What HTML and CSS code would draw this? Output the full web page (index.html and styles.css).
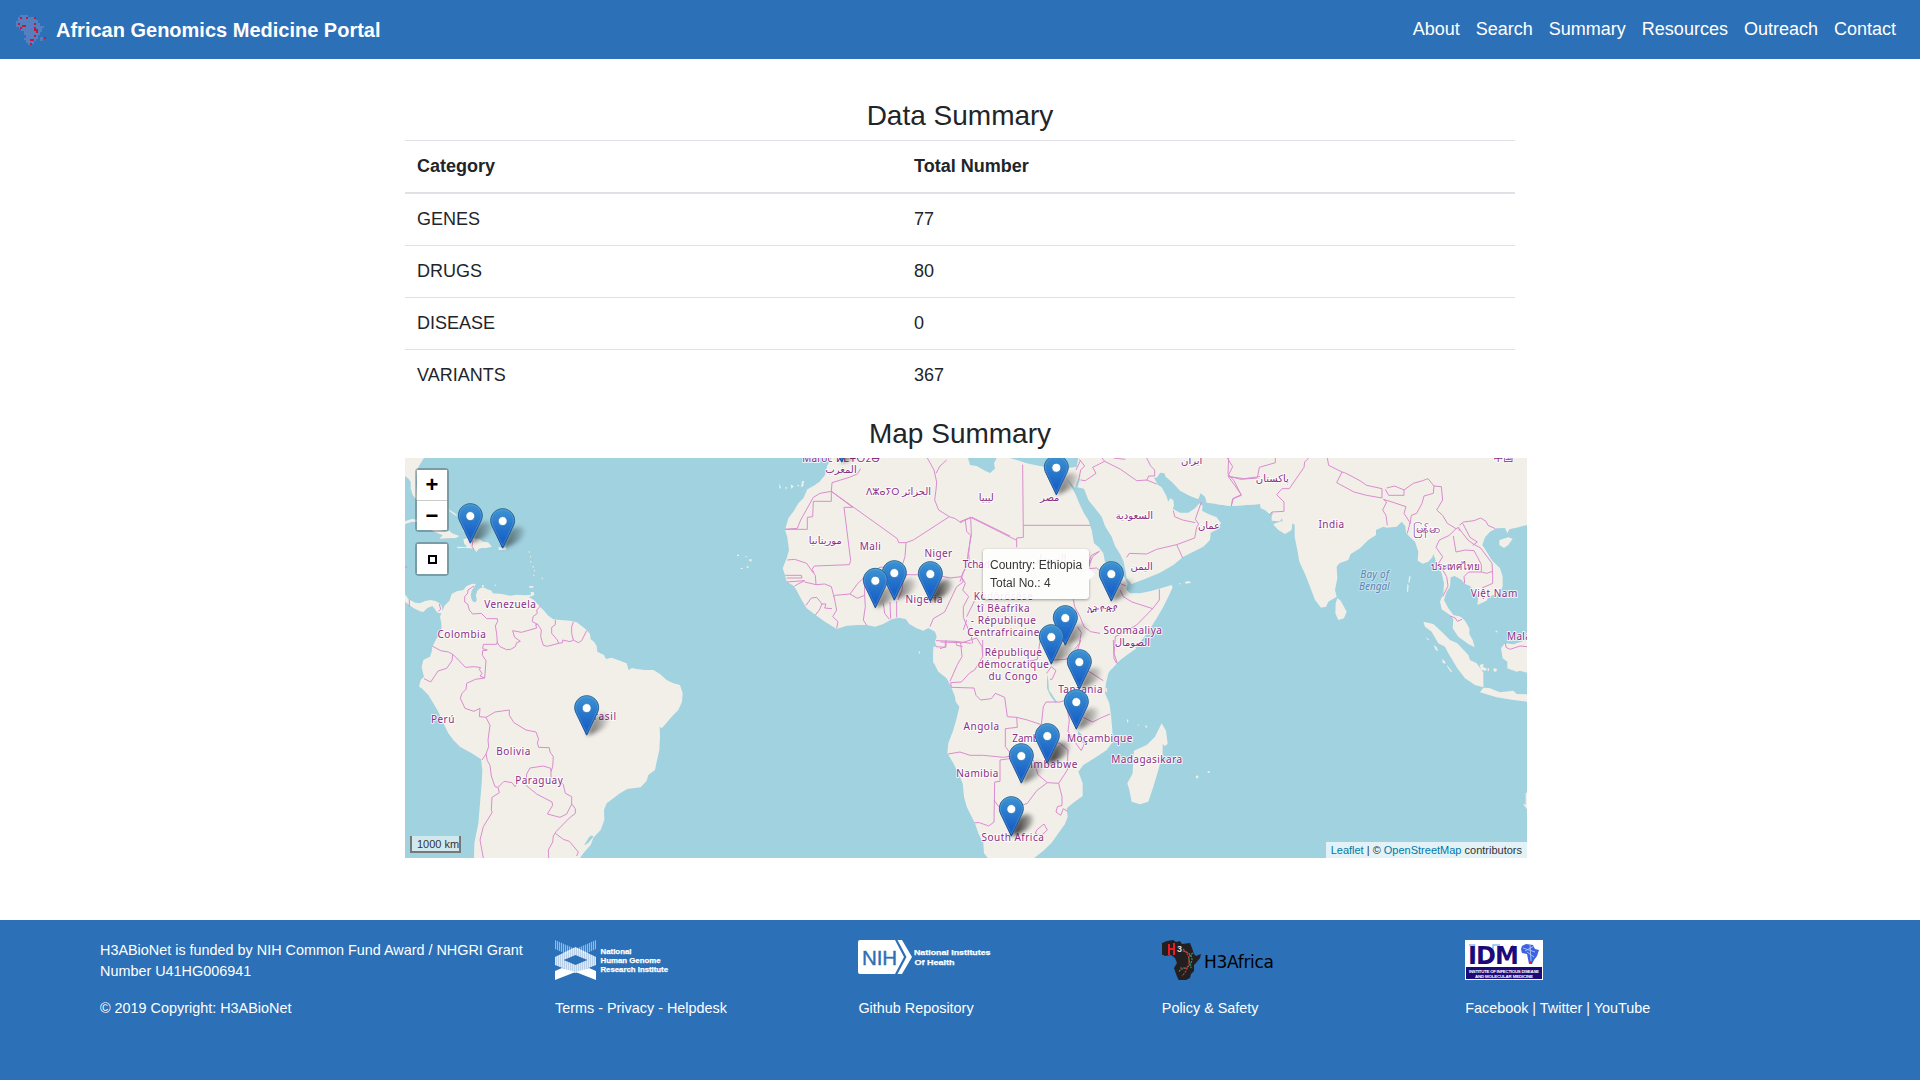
FILE: index.html
```html
<!DOCTYPE html>
<html lang="en">
<head>
<meta charset="utf-8">
<title>African Genomics Medicine Portal</title>
<link rel="stylesheet" href="styles.css">
</head>
<body>
<nav class="navbar">
  <a class="brand">
    <svg class="brand-logo" viewBox="0 0 30 30" aria-hidden="true">
      <path fill="#5480c2" d="M4 0h8v2h8v3h2v3h2v3h4v2h-2v4h-2v3h-2v4h-2v2h-2v3h-3v2h-3v-3h-2v-3h-2v-2h2v-3h-2v-4h-3v-3H7v1H3v-2H0V6h2V2h2z"/>
      <path fill="#5480c2" d="M24 22h3v4h-3z"/>
      <path fill="#c2183a" d="M4 2h2v2H4zM10 2h2v2h-2zM18 2h2v2h-2zM2 8h2v2H2zM6 10h4v2H6zM4 12h2v2H4zM18 8h2v2h-2zM18 12h2v2h2v4h-2v-2h-2zM18 20h2v2h-2zM14 24h4v2h-4zM28 22h2v2h-2zM14 28h2v2h-2z"/>
    </svg>
    <span>African Genomics Medicine Portal</span>
  </a>
  <div class="nav-links">
    <a>About</a><a>Search</a><a>Summary</a><a>Resources</a><a>Outreach</a><a>Contact</a>
  </div>
</nav>

<main class="container">
  <h3>Data Summary</h3>
  <table class="table">
    <thead><tr><th class="col-category">Category</th><th>Total Number</th></tr></thead>
    <tbody>
      <tr><td>GENES</td><td>77</td></tr>
      <tr><td>DRUGS</td><td>80</td></tr>
      <tr><td>DISEASE</td><td>0</td></tr>
      <tr><td>VARIANTS</td><td>367</td></tr>
    </tbody>
  </table>
  <h3>Map Summary</h3>
  <div class="map">
    <svg class="map-canvas" viewBox="15 24 3366 1200">
      <defs>
        <linearGradient id="pin-fill" x1="0" y1="0" x2="0" y2="1">
          <stop offset="0" stop-color="#3d93d2"/><stop offset=".75" stop-color="#1a64c8"/><stop offset="1" stop-color="#1a64c8"/>
        </linearGradient>
        <linearGradient id="pin-line" x1="0" y1="0" x2="0" y2="1">
          <stop offset="0" stop-color="#2e6c97"/><stop offset="1" stop-color="#1c4f94"/>
        </linearGradient>
        <linearGradient id="shade" x1="0" y1="0" x2="1" y2="0">
          <stop offset="0" stop-color="#000" stop-opacity=".6"/><stop offset="1" stop-color="#000" stop-opacity=".08"/>
        </linearGradient>
        <filter id="soft" x="-50%" y="-50%" width="200%" height="200%"><feGaussianBlur stdDeviation="2"/></filter>
        <g id="pin" transform="scale(3) translate(-12.5 -40.5)">
          <path fill="url(#pin-fill)" stroke="url(#pin-line)" d="M12.5.5C5.9.5.5 5.9.5 12.5c0 3 1.500 5.700 2.800 8.300L12.500 40l9.200-19.200c1.300-2.600 2.800-5.300 2.800-8.300C24.500 5.900 19.100.5 12.500.5z"/>
          <path fill="none" stroke="#fff" stroke-opacity=".13" d="M12.500 1.600C6.500 1.600 1.600 6.500 1.600 12.500c0 2.700 1.400 5.300 2.700 7.900L12.500 37.700l8.200-17.300c1.300-2.600 2.700-5.200 2.700-7.900C23.400 6.500 18.500 1.600 12.500 1.600z"/>
          <circle cx="12.500" cy="12.900" r="4.500" fill="#fff" stroke="#2a73b4" stroke-width=".8"/>
        </g>
        <g id="shadow" transform="scale(3)">
          <path fill="url(#shade)" filter="url(#soft)" d="M0 0L6-15C9-22 20-24 22-18C23-11 14-4 0 0z"/>
        </g>
      </defs>

      <g class="land">
        <path d="M15 24L72 24 58 46 50 62 48 100 52 152 38 135 32 115 32 95 24 85 15 78z"/>
        <path d="M15 214l20-7 18 2-4 6-14 1-20 6zM98 240l14-2 20 6 16-2 8 8 22 8-10 6-24 1-26 1 10-10-14-6-18-8zM190 268l14-4 20 1 16 2 8 8 16 2 12 13-18 4-15 0-8 4-6 8-8-10-24-3-24 2-2-5 24 1 6-3-8-6zM296 292h24l-2 8h-22zM145 178l14 8 16 12-10-2-16-12zM186 238l14 6-4 6z"/>
        <path d="M386 304h3v4h-3zM390 318h3v4h-3zM391 334h3v4h-3zM398 348h3v5h-3zM402 360h3v4h-3zM400 374h3v4h-3zM425 383h4v3h-4zM388 408h12v5h-12zM392 426h9l2 8-10 6zM246 405h5v6h-5zM284 404h4v3h-4zM1011 314h6v4h-6zM1036 318h4v3h-4zM1048 328h7v6h-7zM1040 349h6v4h-6zM1022 354h6v3h-6z"/>
        <path d="M15 432L25 447 45 458 60 460 75 453 92 450 106 453 118 460 125 467 128 482 133 468 148 452 155 432 170 424 190 420 200 408 215 402 228 401 222 412 214 424 216 438 224 442 229 432 232 422 240 415 250 412 262 418 275 422 278 430 305 432 330 437 350 434 375 436 395 434 388 442 402 450 418 468 430 480 445 497 460 508 480 510 510 512 530 517 545 528 560 540 570 552 572 568 582 575 590 588 592 605 612 615 618 627 635 623 660 632 680 640 686 660 696 654 710 657 735 660 760 660 780 672 800 690 820 700 840 705 848 730 846 755 835 780 815 800 800 818 785 835 779 830 780 860 778 900 770 935 765 960 745 975 740 992 722 1012 682 1017 660 1030 640 1045 620 1060 612 1080 613 1110 602 1140 580 1163 572 1185 550 1210 540 1224 222 1224 223 1180 235 1120 240 1060 245 1000 247 960 243 928 215 910 180 890 160 870 145 850 130 820 115 785 100 760 85 735 65 715 57 710 62 690 72 680 68 665 65 650 70 630 90 620 95 605 97 590 110 565 125 545 124 520 120 500 124 490 112 488 105 478 97 468 82 474 70 486 60 484 40 474 15 455z"/>
      </g>
      <g class="land" transform="translate(1110 0)">
        <path d="M185 24L172 46 165 75 148 96 130 108 112 118 100 145 85 160 72 182 55 205 45 240 52 262 57 300 50 325 38 355 45 375 50 395 72 408 82 425 95 450 110 475 130 490 150 505 165 515 200 537 230 527 265 525 290 525 315 530 340 522 365 508 385 503 407 507 418 522 440 535 460 542 475 534 495 545 500 560 495 575 500 590 490 600 490 640 722 640 722 24 680 24 672 40 675 56 660 69 645 62 620 48 600 45 594 24z"/>
        <path d="M28 100l5 14-5 2zM46 110l6 3-5 6zM62 103l9 6-7 8zM82 104l6 2-4 5zM96 94l6-2-2 16-7 4zM446 602l5 5-4 6z"/>
      </g>
      <g class="land" transform="translate(1680 0)">
        <path d="M140 24L158 26 200 40 250 50 300 50 325 54 350 50 355 24 900 24 900 162 850 166 810 168 770 162 740 158 735 140 722 130 715 148 690 138 660 122 638 98 617 80 613 70 600 68 592 82 582 84 594 105 605 112 618 135 625 155 630 145 640 150 642 168 638 176 660 188 685 188 705 175 718 160 728 168 726 182 745 192 770 202 783 220 768 240 752 248 750 270 730 290 700 305 670 320 640 345 600 368 560 385 515 402 500 385 496 360 490 332 480 312 465 288 455 260 435 228 425 200 405 175 385 150 372 116 352 112 360 86 352 92 345 114 320 86 335 112 345 130 360 165 372 190 385 210 395 240 402 280 415 290 430 310 435 335 455 348 480 365 497 388 503 402 498 418 510 430 540 430 570 424 605 414 635 405 638 412 625 440 610 470 590 505 560 552 520 600 480 630 455 658 300 670 -10 660 -10 200z"/>
        <path d="M674 396l12-3 8 5-16 3zM657 400h4v3h-4z"/>
      </g>
      <g class="land" transform="translate(1620 570)">
        <path d="M-20 20L-20 65-5 95 20 115 32 138 45 170 47 185 58 200 50 235 40 270 25 310 22 340 40 370 55 400 68 430 72 470 80 500 95 530 105 550 115 580 130 610 132 640 145 656 280 656 310 632 335 608 355 580 375 552 383 530 380 505 400 488 428 468 428 430 420 408 415 395 430 375 470 350 500 330 515 310 517 270 513 225 508 190 495 160 498 130 505 100 515 85 540 60 560 45 590 25 500 0z"/>
        <path d="M665 250L678 272 683 312 674 318 668 312 668 340 655 390 640 440 625 485 600 493 575 485 568 450 562 430 578 400 580 350 582 332 620 315 645 290z"/>
        <path d="M561 238l4 2-1 8-3-3zM593 252l4 2-2 4zM615 255l8 5-5 4zM767 409l6-3 3 6-6 4zM803 394h6v5h-6zM497 144h4v12h-4z"/>
      </g>
      <g class="land" transform="translate(2460 0)">
        <path d="M-10 163L35 168 80 165 120 162 122 175 135 180 148 192 160 186 155 200 155 212 180 214 186 205 188 213 165 220 160 224 175 240 195 252 215 240 217 220 224 224 224 260 232 300 238 335 255 372 270 410 285 450 303 473 318 470 325 455 350 440 345 420 352 385 350 350 358 340 385 330 392 312 420 295 445 270 468 255 468 240 490 230 500 233 530 230 545 215 556 228 558 248 570 262 585 275 595 305 593 332 608 341 625 335 637 322 640 312 650 340 665 370 672 400 670 430 660 455 665 478 690 495 700 508 698 535 715 560 745 582 764 592 758 570 748 552 748 535 735 512 722 500 700 495 685 475 672 450 680 425 690 410 692 382 704 378 725 390 735 402 750 408 765 425 775 440 772 465 800 452 805 440 835 430 848 410 848 380 840 355 815 330 800 305 787 285 795 262 810 245 830 235 855 234 862 250 868 238 895 232 921 225 921 24 -10 24z"/>
        <path d="M352 444L362 452 380 485 372 505 355 510 346 490 347 460zM610 515L640 522 665 545 690 570 712 580 745 615 750 630 770 640 790 668 790 712 765 705 735 685 712 655 685 610 675 590 655 580 635 545 615 530zM780 727L790 713 808 714 840 727 880 722 890 732 921 733 921 755 880 750 830 742zM921 570L880 583 855 580 843 595 848 625 862 635 862 655 890 665 900 662 921 668zM838 270L865 262 878 266 865 285 852 294 838 285z"/>
        <path d="M568 378l4 2-4 20-3-4zM562 402l4 4-2 22-3-4zM617 562l12 8-5 1zM641 586l8 4 6 14-8-4zM667 627l7 6 3 8-9-2zM681 645l16 20-5 0-10-14zM779 645l12-4-2 10 12 5-4 6-14-2zM803 655h4v8h-4zM819 656l10-1 2 8-8 3zM827 542h5v5h-5zM917 1028l4 0v50l-12-16 8 2z"/>
      </g>

      <g class="water">
        <path d="M213 428q-2 16 4 24 6 8 12 2 4-10-6-24zM568 1160l8-4 4 4-16 20-12 6z"/>
        <path d="M1941 671l4 22 2 28 10 14 14 22-4 2-16-22-10-22z"/>
        <path d="M2034 843l10 10 4 16-6-4-8-12z"/>
      </g>

      <g class="borders">
        <path d="M222 408L204 420 203 430 194 440 194 456 203 462 208 480 218 492 244 490 260 506 292 506 293 514 286 528 290 550 292 578 300 590 320 599 332 598 346 590 350 578 361 574 344 562 338 542 364 547 410 534 407 524 413 523 397 515 399 500 412 490 410 480 422 468M413 523L424 540 422 560 430 586 442 589 476 580 472 570 455 550 455 532 466 524 466 510M476 580L488 578 488 570 510 575 520 570 515 550 515 530 520 516M520 570L535 578 545 572 560 542M292 575L290 583 250 583 248 596 262 600 248 602 247 616 258 632 254 684 240 678 246 670 238 658 242 653 224 650 196 652 170 624 158 613 145 606 122 602 97 588M158 613L156 632 140 655 114 663 103 680 92 696 72 686M254 684L226 688 200 700 198 718 186 730 181 745 195 775 222 784 240 775 238 800 258 802 270 826 264 870 266 890 258 912 246 930M258 802L285 786 328 780 328 796 342 818 378 840 408 846 416 868 412 878 416 892 448 893 450 906 460 920 458 950 453 965 452 955 430 948 390 954 380 972 378 1000M258 912L262 932 270 946 274 978 285 1010 294 1012 312 994 336 998 345 1010 350 1002M378 1006L410 1032 456 1056 458 1066 442 1092 480 1102 500 1092 515 1062 515 1040 496 1030 490 1004 485 998M453 965L453 985M294 1012L298 1028 276 1042 274 1078 276 1088 250 1130 240 1170 250 1224M515 1062L526 1076 526 1090 508 1104 468 1145 460 1158 458 1176 445 1200 446 1224M466 1150L490 1168 508 1174 535 1206 530 1218M28 448L28 470M118 462L122 478 115 484M15 352L22 350M219 270L216 290 222 298"/>
        <g transform="translate(1110 0)"><path d="M272 56L262 72 238 82 186 98 184 124 150 130 130 142 92 210 82 235 45 238 112 238 112 202 128 200 130 154 184 154 184 124 382 266 386 278 408 278 430 270 538 200 506 180 494 150 498 120 500 96 492 60 472 24M498 70L510 48 530 30M538 200L556 206 572 218 586 210 606 202 720 258M586 210L590 244 602 256 596 310 598 340 580 366 574 380 540 384 500 375 410 374 382 366 366 352M184 124L248 172 222 172 242 332 238 344 133 348 126 358 132 368M408 278L405 320 398 342 366 350 330 352 304 366 276 388 262 402 240 432 196 436 190 440M52 330L74 328 110 340 128 366 136 376 138 404 164 402 184 410 192 440 196 460 200 480 188 500 204 515 200 535M46 376L94 376 96 384 50 384M50 396L104 392 84 402 74 408M138 404L104 396M108 466L124 444 140 442 156 462 148 480 136 495M156 462L168 462 164 474 186 476M240 432L262 445 284 436 286 470 280 510 290 526M284 400L284 436M340 460L344 490 358 508M360 456L362 506M380 454L380 502M410 374L400 390 396 420 384 450M574 380L580 396 560 410 540 452 524 486 490 506 480 530M574 380L586 400 578 420 596 440 580 470 580 502 604 560 608 580M498 572L556 574 604 580M498 590L526 592 526 574M556 574L560 586 578 590"/></g>
        <g transform="translate(1680 0)"><path d="M188 44L190 262 170 264 170 292M0 215L32 202 168 270M190 226L392 226M32 202L34 256 24 310 22 335 0 395M20 500L44 452M390 330L386 350 398 320 418 304M418 304L394 316 386 340M340 448L344 470 360 500 372 530 392 545 420 550M386 356L410 354 440 380 470 396 498 408M480 420L490 440 516 456 578 476 530 525 494 545 466 560 462 610 472 640M578 476L598 450 598 418M500 322L508 310 560 312 590 298 650 284 668 324M650 284L704 264 710 232 716 222 706 208 724 156M706 218L668 210 644 200 640 182M348 60L362 30M356 90L362 60 374 48 358 28M362 90L376 92 408 70 398 52 434 34 482 58 530 92 560 90 590 102M434 34L426 24M460 24L496 28M560 24L572 48 584 60 584 78 566 78 560 92M806 24L804 72 822 92 844 136 820 146 814 166M808 80L852 86 900 80M352 530L364 548 358 580 344 598M250 550L240 574 232 628 180 640M0 580L50 564 66 590 68 620M10 540L20 510"/></g>
        <g transform="translate(1620 570)"><path d="M2 6L62 8 66 50 52 74 30 124M0 26L18 20 18 0M128 0L128 50 104 90 90 98 64 126 32 128 34 142 102 144 108 166 122 180 154 176 166 160 194 172 202 230 230 232 232 262 196 266 196 320 212 340M24 342L60 336 90 346 130 346 190 352 240 344M208 356L180 360 180 424 164 426 162 546 146 558 118 548 104 548M230 232L262 240 304 254 310 200 318 186 360 186 378 180M334 60L376 58 410 40 422 0M376 58L386 56 440 90 490 122M320 100L334 80 348 92 336 118 330 118M378 190L388 240 384 274 412 316 424 332 434 308 410 300M430 232L458 246 482 234 510 222M300 256L312 300 360 310 384 330 382 390 356 430 322 428 294 404 280 360 276 366M322 428L290 452 262 490 230 502 196 520M356 430L366 470 366 496 352 500 348 516 362 526 370 506 382 514M290 570L312 552 322 570 302 588 286 580zM162 480L176 500"/><path d="M520 0L522 56 530 70"/></g>
        <g transform="translate(2460 0)"><path d="M22 24L38 50 24 78 62 88 112 84 118 52 166 38 166 24M24 78L44 106 64 134 38 146 34 168M266 24L254 36 252 52 208 116 186 116 170 134 192 156 192 184 156 186 148 194M322 24L326 46 366 66 350 98 402 126 440 136 486 144 486 116 440 106 420 92 374 68M366 66L374 68M500 114L524 108 552 120 552 136 506 136 496 118M552 120L580 100 608 92 624 86 642 108 664 110 668 150 650 180 668 196 682 220 708 236M642 108L640 130 612 138 606 160 590 190 574 196 570 222M490 148L516 156 558 170 552 190 570 218 562 250M490 148L500 156 488 180 498 196 502 226M708 236L688 256 658 270 648 292 668 320 656 340 680 380 684 408 668 440M708 236L716 232 718 242M718 236L728 250 744 270 760 282 782 294 816 340 818 376 818 400 786 414M728 220L750 262 772 276 758 286M718 226L730 216 762 212 782 204 798 214 804 226 826 236M700 258L708 306 736 300 762 302 772 320 784 344 784 366M732 380L746 366 784 366 800 370 818 364M732 380L734 400M690 498L706 504 712 514 726 508M856 578L858 592 870 598 900 588 921 590"/></g>
      </g>

      <g class="labels">
        <text x="330" y="474" textLength="155">Venezuela</text>
        <text x="185" y="563" textLength="145">Colombia</text>
        <text x="128" y="818" textLength="70">Perú</text>
        <text x="604" y="811" textLength="88">Brasil</text>
        <text x="340" y="914" textLength="102">Bolivia</text>
        <text x="417" y="1001" textLength="143">Paraguay</text>
        <text x="1252" y="35" textLength="90">Maroc</text>
        <text x="1374" y="35" textLength="132" lengthAdjust="spacingAndGlyphs">ⵍⵎⵖⵔⵉⴱ</text>
        <text class="arabic" x="1323" y="70">المغرب</text>
        <text x="1448" y="136" textLength="100" lengthAdjust="spacingAndGlyphs">ⴷⵣⴰⵢⵔ</text>
        <text class="arabic" x="1550" y="136">الجزائر</text>
        <text class="arabic" x="1759" y="152">ليبيا</text>
        <text class="arabic" x="1276" y="281">موريتانيا</text>
        <text x="1411" y="300" textLength="63">Mali</text>
        <text x="1615" y="320" textLength="83">Niger</text>
        <text x="1729" y="354" textLength="82">Tchad</text>
        <text x="1572" y="460" textLength="111">Nigeria</text>
        <text class="arabic" x="1949" y="152">مصر</text>
        <text class="arabic" x="2203" y="206">السعودية</text>
        <text class="arabic" x="2427" y="236">عمان</text>
        <text class="arabic" x="2225" y="361">اليمن</text>
        <text class="arabic" x="1948" y="335">السودان</text>
        <text class="arabic" x="2375" y="42">ایران</text>
        <text x="2107" y="487" textLength="92" lengthAdjust="spacingAndGlyphs">ኢትዮጵያ</text>
        <text x="2198" y="552" textLength="175">Soomaaliya</text>
        <text class="arabic" x="2197" y="588">الصومال</text>
        <text x="1810" y="451" textLength="177">Ködörösêse</text>
        <text x="1810" y="487" textLength="158">tî Bêafrîka</text>
        <text x="1810" y="523" textLength="195">- République</text>
        <text x="1810" y="558" textLength="216">Centrafricaine</text>
        <text x="1840" y="618" textLength="172">République</text>
        <text x="1840" y="654" textLength="214">démocratique</text>
        <text x="1839" y="690" textLength="147">du Congo</text>
        <text x="2041" y="730" textLength="133">Tanzania</text>
        <text x="1744" y="839" textLength="107">Angola</text>
        <text x="1889" y="877" textLength="104">Zambia</text>
        <text x="2099" y="877" textLength="196">Moçambique</text>
        <text x="2240" y="938" textLength="213">Madagasikara</text>
        <text x="1732" y="981" textLength="126">Namibia</text>
        <text x="1952" y="953" textLength="160">Zimbabwe</text>
        <text x="1838" y="1174" textLength="187">South Africa</text>
        <text class="arabic" x="2617" y="97">پاکستان</text>
        <text x="2794" y="234" textLength="77">India</text>
        <text x="3081" y="250" textLength="82" lengthAdjust="spacingAndGlyphs">မြန်မာ</text>
        <text x="3166" y="361" textLength="147" lengthAdjust="spacingAndGlyphs">ประเทศไทย</text>
        <text x="3282" y="440" textLength="140">Việt Nam</text>
        <text x="3386" y="571" textLength="130">Malaysia</text>
        <text x="3310" y="32">中国</text>
        <text class="sea" x="2924" y="384" textLength="86">Bay of</text>
        <text class="sea" x="2923" y="419" textLength="92">Bengal</text>
      </g>

      <g>
        <use href="#shadow" transform="translate(211 280)"/><use href="#shadow" transform="translate(308 295)"/>
        <use href="#shadow" transform="translate(560 857)"/><use href="#shadow" transform="translate(1325 38)"/>
        <use href="#shadow" transform="translate(1426 473)"/><use href="#shadow" transform="translate(1483 451)"/>
        <use href="#shadow" transform="translate(1591 454)"/><use href="#shadow" transform="translate(1591 454)"/>
        <use href="#shadow" transform="translate(1969 134)"/><use href="#shadow" transform="translate(2135 454)"/>
        <use href="#shadow" transform="translate(1996 586)"/><use href="#shadow" transform="translate(1954 642)"/>
        <use href="#shadow" transform="translate(2038 718)"/><use href="#shadow" transform="translate(2030 839)"/>
        <use href="#shadow" transform="translate(1942 941)"/><use href="#shadow" transform="translate(1942 941)"/>
        <use href="#shadow" transform="translate(1865 1000)"/><use href="#shadow" transform="translate(1834 1158)"/>
        <use href="#shadow" transform="translate(1834 1158)"/>
      </g>
      <g>
        <use href="#pin" transform="translate(1325 38)"/><use href="#pin" transform="translate(1969 136)"/>
        <use href="#pin" transform="translate(211 281)"/><use href="#pin" transform="translate(308 296)"/>
        <use href="#pin" transform="translate(1483 452)"/><use href="#pin" transform="translate(1591 455)"/>
        <use href="#pin" transform="translate(2134 455)"/><use href="#pin" transform="translate(1426 475)"/>
        <use href="#pin" transform="translate(1996 587)"/><use href="#pin" transform="translate(1954 644)"/>
        <use href="#pin" transform="translate(2038 719)"/><use href="#pin" transform="translate(2029 839)"/>
        <use href="#pin" transform="translate(560 857)"/><use href="#pin" transform="translate(1942 941)"/>
        <use href="#pin" transform="translate(1864 1001)"/><use href="#pin" transform="translate(1834 1160)"/>
      </g>
    </svg>

    <div class="map-controls">
      <div class="bar">
        <button>+</button>
        <button>−</button>
      </div>
      <div class="bar"><button><span class="reset-icon"></span></button></div>
    </div>
    <div class="tooltip">Country: Ethiopia<br>Total No.: 4</div>
    <div class="scale">1000 km</div>
    <div class="attribution"><a>Leaflet</a> | © <a>OpenStreetMap</a> contributors</div>
  </div>
</main>

<footer class="footer">
  <div class="footer-col">
    <p class="grant">H3ABioNet is funded by NIH Common Fund Award / NHGRI Grant Number U41HG006941</p>
    <p>© 2019 Copyright: H3ABioNet</p>
  </div>
  <div class="footer-col">
    <svg class="logo" width="120" height="40" viewBox="0 0 120 40">
      <defs><pattern id="bars" width="2" height="4" patternUnits="userSpaceOnUse"><path fill="#fff" d="M0 0h1.200v4H0z"/></pattern></defs>
      <path fill="url(#bars)" opacity=".5" d="M0 0l20.500 9L41 0v9l-11 5-9.500-5-9.500 5L0 9z"/>
      <path fill="#fff" opacity=".62" d="M0 17L20.500 7 41 17v8L20.500 33 0 25zM8.500 20l12 5 12-5-12-5z" fill-rule="evenodd"/>
      <path fill="url(#bars)" opacity=".6" d="M0 17L20.500 7 41 17v8L20.500 33 0 25zM8.500 20l12 5 12-5-12-5z" fill-rule="evenodd"/>
      <path fill="#fff" d="M0 31l7-3 13.500 4L34 28l7 3v9l-20.500-8L0 40z"/>
      <g class="logo-text" font-size="7.600"><text x="45.500" y="13.500" textLength="31" lengthAdjust="spacingAndGlyphs">National</text><text x="45.500" y="22.800" textLength="60" lengthAdjust="spacingAndGlyphs">Human Genome</text><text x="45.500" y="32" textLength="67.500" lengthAdjust="spacingAndGlyphs">Research Institute</text></g>
    </svg>
    <p>Terms - Privacy - Helpdesk</p>
  </div>
  <div class="footer-col">
    <svg class="logo" width="140" height="40" viewBox="0 0 140 40">
      <path fill="#fff" d="M2 0h35l9 17-9 17H2q-2 0-2-2V2q0-2 2-2zM39.500 0H44l10 17-10 17h-4.500l9-17z"/>
      <text x="4" y="24.500" font-size="20.500" textLength="35" fill="#2c6fb6" stroke="#2c6fb6" stroke-width=".4">NIH</text>
      <g class="logo-text" font-size="8"><text x="56" y="15" textLength="76.500" lengthAdjust="spacingAndGlyphs">National Institutes</text><text x="56.500" y="24.500" textLength="40" lengthAdjust="spacingAndGlyphs">Of Health</text></g>
    </svg>
    <p>Github Repository</p>
  </div>
  <div class="footer-col">
    <svg class="logo" width="120" height="40" viewBox="0 0 120 40">
      <path fill="#231f20" d="M5 1L11 0l3 2 4-1 2 3 8-1 2 5 2 6 2 2 5-2-1 4-4 5-2 2v6l-3 3-1 4-4 2-3 2-4-1-3-7-2-6 3-5-2-5-4-3-6 1-4-2-3-5 1-5z"/>
      <path fill="#ec1c24" d="M6 4h2v4h3V3h2v12h-2v-5H8v5H6z"/>
      <text x="15" y="12" font-size="9" fill="#ddd" font-weight="700">3</text>
      <path fill="none" stroke="#2f9e58" stroke-width="1.200" stroke-dasharray="2 1" d="M21 11q9 2 9 9-1 5-6 8-6 1-7 4M31 13q-5 3-4 8 2 4 2 7"/>
      <path fill="none" stroke="#e02d35" stroke-width="1.200" stroke-dasharray="2 1" d="M21 9q7 6 6 14-2 8-7 13M18 28h7"/>
      <text class="h3a-text" x="42" y="27.700" textLength="70">H3Africa</text>
    </svg>
    <p>Policy &amp; Safety</p>
  </div>
  <div class="footer-col">
    <svg class="logo" width="78" height="40" viewBox="0 0 78 40">
      <path fill="#fff" d="M0 0h78v40H0z"/><path fill="#1b0a78" d="M1 27h76v12H1z"/>
      <path fill="none" stroke="#8fbaf5" stroke-width="1.500" d="M4 5h5.500v16M28 12V5h7M45 11l3-6"/>
      <text class="idm-text" x="3" y="23.500" textLength="51">IDM</text>
      <path fill="#3d62e0" d="M57 6l4-2 7 1 2 4 4 1-2 6-3 4-2 4h-3l-1-5-1-5-5-1-1-4z"/>
      <path stroke="#b6d0ff" fill="none" d="M58 8l12 4M60 11l9-5M65 5l1 16M62 12l7 5" stroke-width=".8"/><path fill="#e01b3c" d="M65 22h2v2h-2z"/>
      <g fill="#fff" font-size="4.400" font-weight="700"><text x="4" y="32.500" textLength="70">INSTITUTE OF INFECTIOUS DISEASE</text><text x="10" y="37.500" textLength="58">AND MOLECULAR MEDICINE</text></g>
    </svg>
    <p>Facebook | Twitter | YouTube</p>
  </div>
</footer>
</body>
</html>
```
FILE: styles.css
```css
*, *::before, *::after { box-sizing: border-box; }

body {
  margin: 0;
  min-height: 1080px;
  display: flex;
  flex-direction: column;
  background: #fff;
  color: #212529;
  font: 18px/1.5 "Liberation Sans", Arial, sans-serif;
}

p { margin: 0; }

.navbar {
  height: 59px;
  padding: 0 16px;
  display: flex;
  align-items: center;
  justify-content: space-between;
  background: #2c70b7;
  color: #fff;
}
.brand {
  display: flex;
  align-items: center;
  gap: 10px;
  font-size: 20px;
  font-weight: 700;
}
.brand-logo { width: 30px; height: 30px; }
.nav-links { display: flex; padding-bottom: 1px; }
.nav-links a { padding: 0 8px; }

.container {
  width: 1110px;
  margin: 40px auto 0;
}
h3 {
  margin: 0 0 8px;
  font-size: 28px;
  font-weight: 500;
  line-height: 33px;
  text-align: center;
}
.table {
  width: 100%;
  margin-bottom: 16px;
  border-collapse: collapse;
}
.table th, .table td {
  padding: 12px;
  border-top: 1px solid #dee2e6;
  text-align: left;
}
.table thead th { border-bottom: 2px solid #dee2e6; }
.col-category { width: 497px; }

.map {
  position: relative;
  width: 1122px;
  height: 400px;
  overflow: hidden;
  background: #a1d2df;
  font-size: 12px;
}
.map-canvas { display: block; width: 1122px; height: 400px; }
.land { fill: #f2efe9; }
.water { fill: #a1d2df; }
.borders {
  fill: none;
  stroke: #db8ccf;
  stroke-width: 3;
  stroke-linejoin: round;
}
.labels {
  font: 30px "Noto Sans", "DejaVu Sans", "Noto Sans CJK SC", sans-serif;
  text-anchor: middle;
  fill: #8b2e86;
  stroke: #fff;
  stroke-opacity: .8;
  stroke-width: 6;
  stroke-linejoin: round;
  paint-order: stroke;
}
.labels .arabic { font-family: "DejaVu Sans", sans-serif; }
.labels .sea { fill: #5b84b8; font-style: italic; stroke-opacity: .35; }

.map-controls {
  position: absolute;
  top: 10px;
  left: 10px;
  display: grid;
  gap: 10px;
}
.bar {
  width: 34px;
  border: 2px solid rgba(0, 0, 0, .25);
  border-radius: 4px;
  background-clip: padding-box;
}
.bar button {
  width: 30px;
  height: 30px;
  padding: 0;
  display: flex;
  align-items: center;
  justify-content: center;
  border: 0;
  background: #fff;
  color: #000;
  font: 700 22px/30px "Liberation Sans", Arial, sans-serif;
}
.bar button + button { border-top: 1px solid #ccc; }
.reset-icon { width: 9px; height: 9px; border: 2px solid #000; }

.tooltip {
  position: absolute;
  left: 578px;
  top: 91px;
  width: 106px;
  padding: 6px;
  border: 1px solid #fff;
  border-radius: 3px;
  background: #fff;
  color: #222;
  line-height: 18px;
  white-space: nowrap;
  box-shadow: 0 1px 3px rgba(0, 0, 0, .4);
  opacity: .9;
}
.tooltip::after {
  content: "";
  position: absolute;
  top: 18px;
  right: -13px;
  border: 6px solid transparent;
  border-left-color: #fff;
}
.scale {
  position: absolute;
  left: 5px;
  bottom: 5px;
  width: 51px;
  height: 17px;
  padding: 2px 0 1px 5px;
  border: 2px solid #777;
  border-top: 0;
  overflow: hidden;
  background: rgba(255, 255, 255, .5);
  color: #333;
  font-size: 11px;
  line-height: 12px;
  white-space: nowrap;
}
.attribution {
  position: absolute;
  right: 0;
  bottom: 0;
  padding: 0 5px;
  background: rgba(255, 255, 255, .7);
  color: #333;
  font-size: 11px;
  line-height: 16px;
}
.attribution a { color: #0078a8; }

.footer {
  flex: 1;
  margin-top: 62px;
  padding-left: 85px;
  display: grid;
  grid-template-columns: 455px repeat(4, 303.400px);
  background: #2c70b7;
  color: #fff;
  font-size: 14.400px;
}
.footer-col { padding: 20px 15px 0; line-height: 21px; }
.grant { margin-bottom: 16px; }
.logo { display: block; margin-bottom: 18px; font-family: "Liberation Sans", Arial, sans-serif; }
.logo-text { fill: #fff; stroke: #fff; stroke-width: .25; font-weight: 700; }
.h3a-text { font: 17px "DejaVu Sans", sans-serif; fill: #000; }
.idm-text { font: 700 24px "DejaVu Sans", sans-serif; fill: #1b0a78; }
```
